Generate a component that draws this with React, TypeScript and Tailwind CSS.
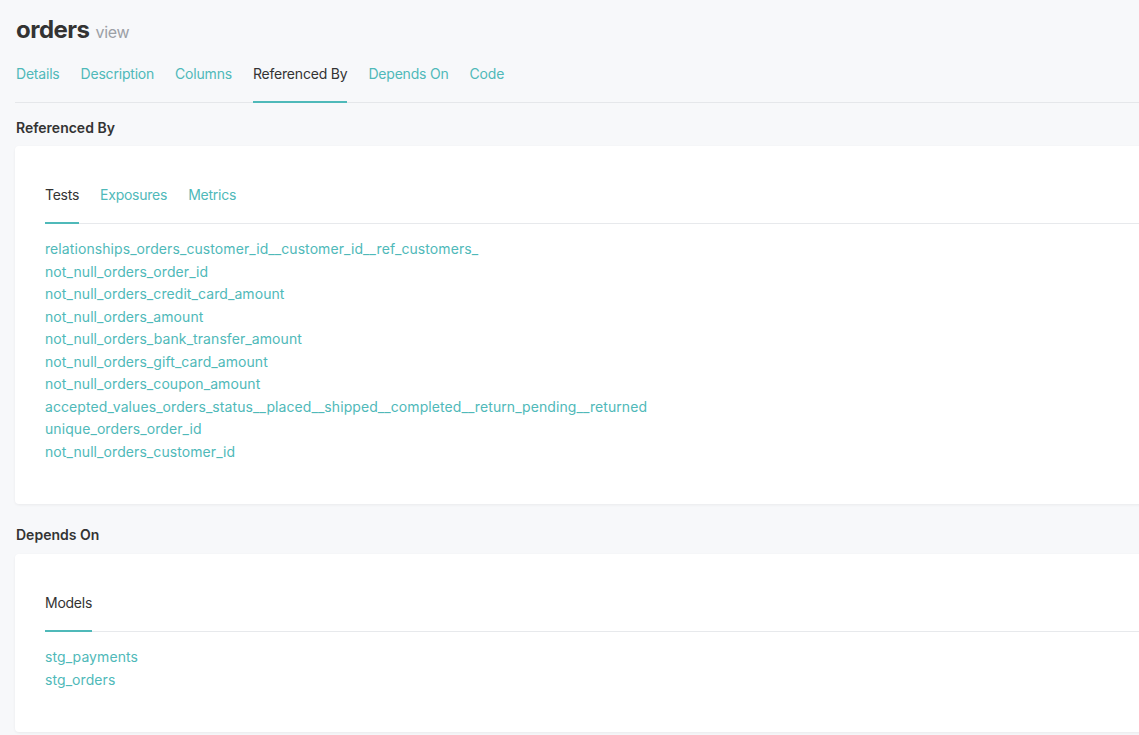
import React from "react";

const topTabs = ["Details", "Description", "Columns", "Referenced By", "Depends On", "Code"];

const tests = [
  "relationships_orders_customer_id__customer_id__ref_customers_",
  "not_null_orders_order_id",
  "not_null_orders_credit_card_amount",
  "not_null_orders_amount",
  "not_null_orders_bank_transfer_amount",
  "not_null_orders_gift_card_amount",
  "not_null_orders_coupon_amount",
  "accepted_values_orders_status__placed__shipped__completed__return_pending__returned",
  "unique_orders_order_id",
  "not_null_orders_customer_id",
];

const models = ["stg_payments", "stg_orders"];

function Tabs({ items, active }: { items: string[]; active: string }) {
  return (
    <div className="flex border-b border-[#e7e9ec]">
      {items.map((t) => (
        <span
          key={t}
          className={
            "-mb-px mr-[21px] border-b-2 pt-[9px] pb-[17px] text-[14px] leading-5 tracking-[-0.25px] " +
            (t === active ? "border-[#4fb9b9] text-[#333]" : "border-transparent text-[#4fb9b9]")
          }
        >
          {t}
        </span>
      ))}
    </div>
  );
}

function Card({ tabs, active, links }: { tabs: string[]; active: string; links: string[] }) {
  return (
    <div className="rounded-[4px] bg-white px-[30px] pt-[30px] pb-[41px] shadow-[0_1px_3px_rgba(0,0,0,0.06)]">
      <Tabs items={tabs} active={active} />
      <ul className="mt-[14px]">
        {links.map((l) => (
          <li key={l} className="text-[14px] leading-[22.5px] tracking-[0.08px] text-[#4fb9b9]">
            {l}
          </li>
        ))}
      </ul>
    </div>
  );
}

export default function App() {
  return (
    <div className="h-[735px] w-[1139px] overflow-hidden bg-[#f7f8fa] font-['Inter','Liberation_Sans',sans-serif] text-[#333]">
      <div className="w-[1200px] pl-[15px]">
        <div className="pt-[14px] pl-px">
          <span className="text-[24px] font-bold leading-8 tracking-[-0.5px]">orders</span>
          <span className="ml-[6px] text-[16px] tracking-[-0.3px] text-[#9ca0a6]">view</span>
        </div>
        <div className="mt-[10px] flex border-b border-[#e5e7ea] pl-px">
          {topTabs.map((t) => (
            <span
              key={t}
              className={
                "-mb-px mr-[21px] border-b-2 pt-[8px] pb-[17px] text-[14px] leading-5 tracking-[-0.2px] " +
                (t === "Referenced By" ? "border-[#4fb9b9] text-[#333]" : "border-transparent text-[#4fb9b9]")
              }
            >
              {t}
            </span>
          ))}
        </div>
        <h3 className="mt-[15px] pl-px text-[14px] font-semibold leading-5">Referenced By</h3>
        <div className="mt-[8px]">
          <Card tabs={["Tests", "Exposures", "Metrics"]} active="Tests" links={tests} />
        </div>
        <h3 className="mt-[21px] pl-px text-[14px] font-semibold leading-5">Depends On</h3>
        <div className="mt-[9px]">
          <Card tabs={["Models"]} active="Models" links={models} />
        </div>
      </div>
    </div>
  );
}
